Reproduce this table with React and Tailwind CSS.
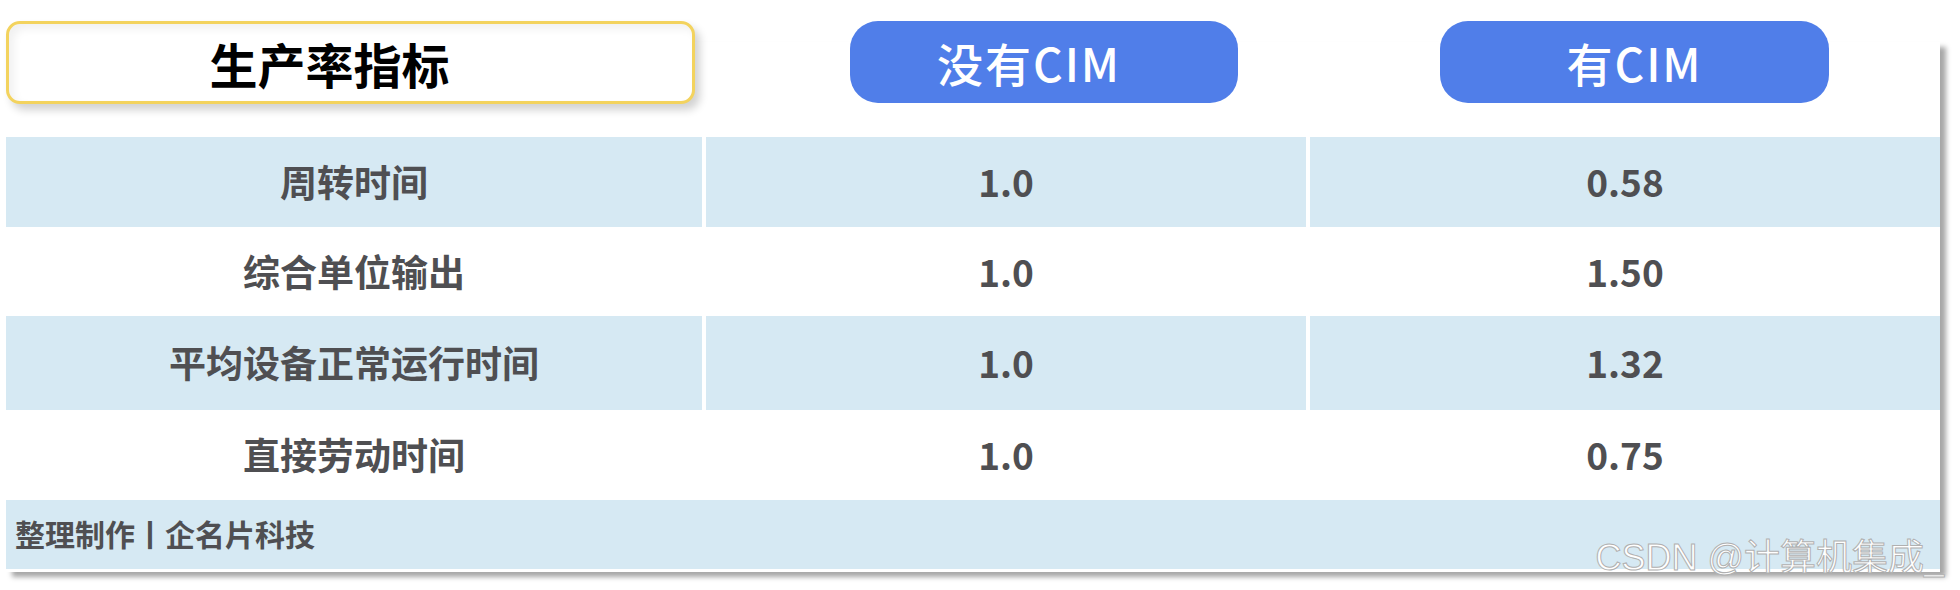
import React from 'react';

const rows = [
  {name: '周转时间', a: '1.0', b: '0.58', blue: true, h: 'h-[90px]'},
  {name: '综合单位输出', a: '1.0', b: '1.50', blue: false, h: 'h-[89px]'},
  {name: '平均设备正常运行时间', a: '1.0', b: '1.32', blue: true, h: 'h-[94px]'},
  {name: '直接劳动时间', a: '1.0', b: '0.75', blue: false, h: 'h-[90px]'},
];

const font = 'font-["Noto_Sans_CJK_SC",sans-serif]';

export default function App() {
  return (
    <div className={`min-h-[590px] bg-white pt-[42px] pl-[6px] ${font}`}>
      <div className="relative flex w-[1934px] flex-col bg-white shadow-[6px_5px_5px_rgba(0,0,0,0.35)]">
        {/* header */}
        <div className="-mt-[21px] grid h-[83px] grid-cols-[696px_600px_630px] gap-x-[4px]">
          <div className="flex h-[83px] w-[689px] items-center justify-center rounded-[14px] border-[3px] border-[#f3d35e] bg-white pr-[42px] shadow-[inset_5px_5px_8px_rgba(0,0,0,0.06),5px_6px_8px_rgba(0,0,0,0.18)]">
            <span className="text-[48px] font-bold leading-none text-black">生产率指标</span>
          </div>
          <div className="ml-[144px] flex h-[82px] w-[388px] items-center justify-center rounded-[28px] bg-[#507ee9] pr-[30px]">
            <span className="text-[46px] font-medium leading-none tracking-[2px] text-white">没有CIM</span>
          </div>
          <div className="ml-[130px] flex h-[82px] w-[389px] items-center justify-center rounded-[28px] bg-[#507ee9]">
            <span className="text-[46px] font-medium leading-none tracking-[2px] text-white">有CIM</span>
          </div>
        </div>

        {/* table */}
        <div className="mt-[33px] flex flex-col">
          {rows.map((r) => (
            <div key={r.name} className={`grid ${r.h} grid-cols-[696px_600px_630px] gap-x-[4px] text-[37px] font-bold text-[#4f4f52]`}>
              <div className={`flex items-center justify-center ${r.blue ? 'bg-[#d6e9f3]' : 'bg-white'}`}>{r.name}</div>
              <div className={`flex items-center justify-center ${r.blue ? 'bg-[#d6e9f3]' : 'bg-white'}`}>{r.a}</div>
              <div className={`flex items-center justify-center ${r.blue ? 'bg-[#d6e9f3]' : 'bg-white'}`}>{r.b}</div>
            </div>
          ))}
          <div className="flex h-[69px] items-center bg-[#d6e9f3] pl-[9px] pb-[2px] text-[30px] font-bold text-[#4f4f52]">
            整理制作丨企名片科技
          </div>
          <div className="h-[3px] bg-white" />
        </div>

        <div className="absolute bottom-[-4px] right-[-4px] font-['Liberation_Sans','Noto_Sans_CJK_SC',sans-serif] text-[36px] leading-none text-white [-webkit-text-stroke:1px_#b0b0b0]">
          CSDN @计算机集成_
        </div>
      </div>
    </div>
  );
}
